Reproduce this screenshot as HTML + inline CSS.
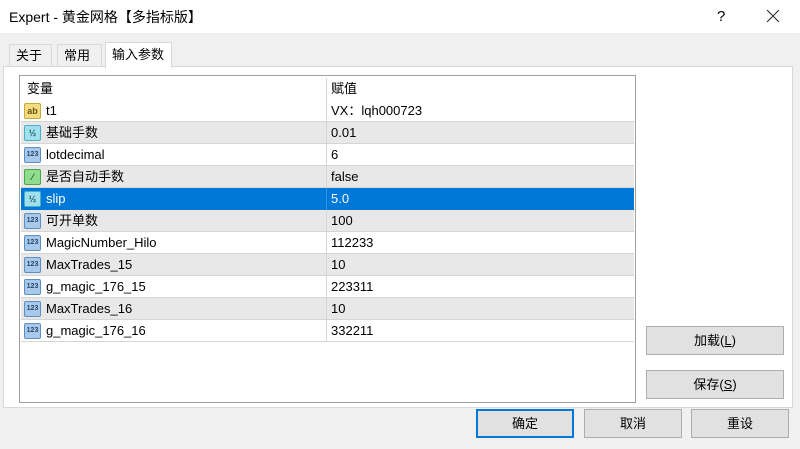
<!DOCTYPE html>
<html><head><meta charset="utf-8"><style>
*{margin:0;padding:0;box-sizing:border-box}
body{width:800px;height:449px;background:#f0f0f0;font-family:"Liberation Sans","Noto Sans CJK SC",sans-serif;font-size:13px;color:#000;position:relative;overflow:hidden}
.abs{position:absolute}
.title{left:0;top:0;width:800px;height:33px;background:#fff}
.title .t{left:9px;top:0;font-size:14px;line-height:34px}
.tab{top:44px;height:23px;border:1px solid #d9d9d9;border-bottom:none;background:#f0f0f0;padding-left:6px;line-height:22px}
.panel{left:3px;top:66px;width:790px;height:342px;background:#fff;border:1px solid #d9d9d9}
.list{left:19px;top:75px;width:617px;height:328px;background:#fff;border:1px solid #a0a0a0}
.row{position:absolute;left:1px;width:613px;height:22px;border-bottom:1px solid #d5d5d5;line-height:21px}
.row .n{position:absolute;left:25px;top:0}
.row .v{position:absolute;left:310px;top:0}
.row .c{position:absolute;left:305px;top:0;width:1px;height:22px;background:#d5d5d5}
.g{background:#e8e8e8}
.sel{background:#0078d7;color:#fff}
.ic{position:absolute;left:3px;top:3px;width:17px;height:16px;border-radius:2px;font-size:7px;font-weight:bold;text-align:center;line-height:14px;border:1px solid}
.i123{background:#a9c9ea;border-color:#5e8fc2;color:#24486e}
.ihalf{background:#9fe0ec;border-color:#4ab0c4;color:#1c6070;font-size:9px}
.iab{background:#f2dc80;border-color:#c9a83a;color:#6a5010;font-size:9px}
.ibool{background:#8fdc8f;border-color:#46a846;color:#1c5a1c;font-size:9px}
.btn{height:29px;background:#e1e1e1;border:1px solid #adadad;text-align:center;line-height:27px;font-size:13px}
</style></head><body>
<div class="abs title"><div class="abs t">Expert - 黄金网格【多指标版】</div>
<div class="abs" style="left:717px;top:0;font-size:15px;line-height:34px">?</div>
<svg class="abs" style="left:766px;top:9px" width="14" height="14"><path d="M1 1L13 13M13 1L1 13" stroke="#333" stroke-width="1.2"/></svg></div>
<div class="abs tab" style="left:9px;width:43px">关于</div>
<div class="abs tab" style="left:57px;width:45px">常用</div>
<div class="abs panel"></div>
<div class="abs tab" style="left:105px;top:42px;width:67px;height:26px;background:#fff;line-height:24px">输入参数</div>
<div class="abs list">
 <div class="row" style="top:2px;border-bottom:none"><span class="n" style="left:6px">变量</span><span class="c" style="height:23px"></span><span class="v">赋值</span></div>
 <div class="row" style="top:24px"><span class="ic iab">ab</span><span class="n">t1</span><span class="c"></span><span class="v">VX：lqh000723</span></div>
 <div class="row g" style="top:46px"><span class="ic ihalf">½</span><span class="n">基础手数</span><span class="c"></span><span class="v">0.01</span></div>
 <div class="row" style="top:68px"><span class="ic i123">123</span><span class="n">lotdecimal</span><span class="c"></span><span class="v">6</span></div>
 <div class="row g" style="top:90px"><span class="ic ibool">⁄</span><span class="n">是否自动手数</span><span class="c"></span><span class="v">false</span></div>
 <div class="row sel" style="top:112px;border-bottom-color:#0078d7"><span class="ic ihalf">½</span><span class="n">slip</span><span class="c" style="background:#3a94dc"></span><span class="v">5.0</span></div>
 <div class="row g" style="top:134px"><span class="ic i123">123</span><span class="n">可开单数</span><span class="c"></span><span class="v">100</span></div>
 <div class="row" style="top:156px"><span class="ic i123">123</span><span class="n">MagicNumber_Hilo</span><span class="c"></span><span class="v">112233</span></div>
 <div class="row g" style="top:178px"><span class="ic i123">123</span><span class="n">MaxTrades_15</span><span class="c"></span><span class="v">10</span></div>
 <div class="row" style="top:200px"><span class="ic i123">123</span><span class="n">g_magic_176_15</span><span class="c"></span><span class="v">223311</span></div>
 <div class="row g" style="top:222px"><span class="ic i123">123</span><span class="n">MaxTrades_16</span><span class="c"></span><span class="v">10</span></div>
 <div class="row" style="top:244px"><span class="ic i123">123</span><span class="n">g_magic_176_16</span><span class="c"></span><span class="v">332211</span></div>
</div>
<div class="abs btn" style="left:646px;top:326px;width:138px">加载(<u>L</u>)</div>
<div class="abs btn" style="left:646px;top:370px;width:138px">保存(<u>S</u>)</div>
<div class="abs btn" style="left:476px;top:409px;width:98px;border:2px solid #0078d7;line-height:25px">确定</div>
<div class="abs btn" style="left:584px;top:409px;width:98px">取消</div>
<div class="abs btn" style="left:691px;top:409px;width:98px">重设</div>
</body></html>
